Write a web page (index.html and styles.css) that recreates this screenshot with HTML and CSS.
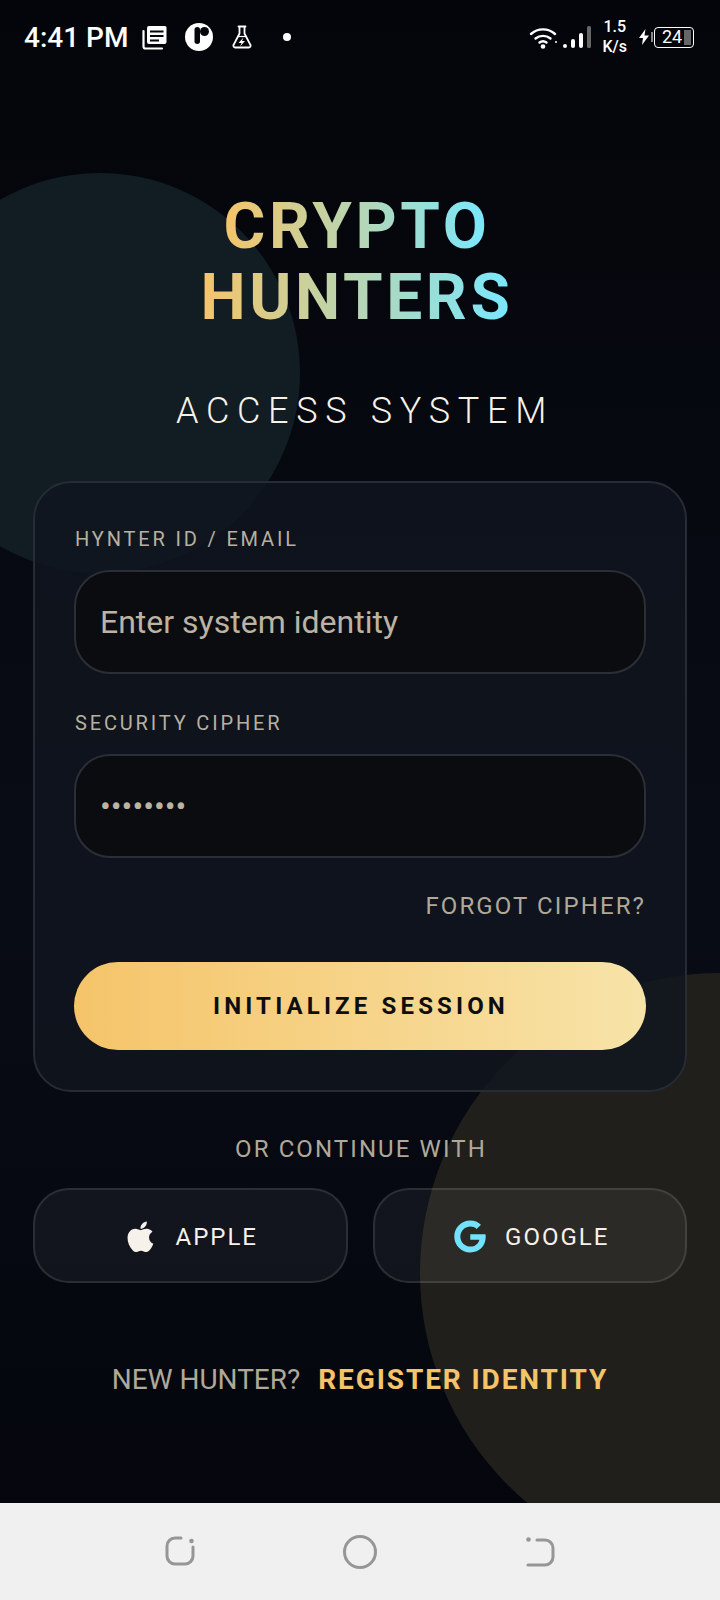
FILE: index.html
```html
<!DOCTYPE html>
<html lang="en">
<head>
    <meta charset="UTF-8">
    <meta name="viewport" content="width=device-width, initial-scale=1.0">
    <title>Crypto Hunters</title>
    <link rel="stylesheet" href="styles.css">
</head>
<body>
    <div id="app">
        <!-- Background circles -->
        <div class="blob blob-teal"></div>
        <div class="blob blob-gold"></div>

        <!-- Status bar -->
        <header class="status-bar">
            <div class="status-left">
                <span class="clock">4:41 PM</span>
                <svg class="icon-news" viewBox="0 0 25 25" width="25" height="25">
                    <path d="M1.5 6v15.5a2 2 0 0 0 2 2H20" fill="none" stroke="#fff" stroke-width="2.2" stroke-linecap="round"/>
                    <path d="M7 1h16a1.5 1.5 0 0 1 1.5 1.5V17a2 2 0 0 1-2 2H7a2 2 0 0 1-2-2V3a2 2 0 0 1 2-2z" fill="#fff"/>
                    <path d="M8 6.5h13.5M8 11h13.5M8 15.5h9" stroke="#05060b" stroke-width="2"/>
                </svg>
                <svg class="icon-p" viewBox="0 0 28 28" width="28" height="28">
                    <circle cx="14" cy="14" r="14" fill="#fff"/>
                    <rect x="9.5" y="4" width="5.5" height="17" rx="2.75" fill="#05060b"/>
                    <circle cx="19.5" cy="8.5" r="4.5" fill="#05060b"/>
                </svg>
                <svg class="icon-flask" viewBox="0 0 20 24" width="20" height="24">
                    <path d="M6.5 1.5h7M7.5 1.5v7L1.6 19.8a1.8 1.8 0 0 0 1.6 2.7h13.6a1.8 1.8 0 0 0 1.6-2.7L12.5 8.500v-7" fill="none" stroke="#fff" stroke-width="1.8" stroke-linecap="round" stroke-linejoin="round"/>
                    <path d="M5.500 11.500h9" stroke="#fff" stroke-width="1.200"/>
                    <path d="M11.500 12.500l-5 5.500h3l-1.500 3.500 5-5.500h-3z" fill="#fff"/>
                </svg>
                <span class="status-dot"></span>
            </div>
            <div class="status-right">
                <svg class="icon-wifi" viewBox="0 0 30 24" width="30" height="24">
                    <path d="M2 9a18 18 0 0 1 24 0M6.500 13.500a12 12 0 0 1 15 0M10.500 17.500a6 6 0 0 1 7 0" fill="none" stroke="#fff" stroke-width="2.400" stroke-linecap="round"/>
                    <circle cx="14" cy="21.500" r="2.300" fill="#fff"/>
                    <circle cx="27" cy="17" r="1" fill="#fff"/>
                </svg>
                <svg class="icon-signal" viewBox="0 0 28 24" width="28" height="24">
                    <rect x="0" y="19" width="4" height="4" rx="2" fill="#fff"/>
                    <rect x="8" y="14" width="4" height="9" rx="2" fill="#fff"/>
                    <rect x="16" y="8" width="4" height="15" rx="2" fill="#fff"/>
                    <rect x="24" y="1" width="4" height="22" rx="1.500" fill="#666"/>
                </svg>
                <span class="net-speed">1.5<br>K/s</span>
                <svg class="icon-bolt" viewBox="0 0 10 16" width="10" height="16">
                    <path d="M6.500 0L0 9h4l-1 7 7-9.500H5.500z" fill="#fff"/>
                </svg>
                <span class="battery-nub"></span>
                <div class="battery">
                    <span class="battery-level">24</span>
                    <span class="battery-fill"></span>
                </div>
            </div>
        </header>

        <!-- Main Content -->
        <main>
            <h1 class="brand">
                <span>CRYPTO</span>
                <span>HUNTERS</span>
            </h1>
            <h2 class="subtitle">ACCESS SYSTEM</h2>

            <form class="login-card">
                <label class="field-label" for="identity">HYNTER ID / EMAIL</label>
                <input class="field-input" id="identity" type="text" placeholder="Enter system identity">

                <label class="field-label" for="cipher">SECURITY CIPHER</label>
                <input class="field-input field-password" id="cipher" type="password" value="password">

                <a class="forgot-link">FORGOT CIPHER?</a>
                <button class="submit-btn" type="button">INITIALIZE SESSION</button>
            </form>

            <p class="divider-text">OR CONTINUE WITH</p>

            <div class="social-row">
                <button class="social-btn" type="button">
                    <svg class="icon-apple" viewBox="3.500 3 16.500 18.300" width="28" height="32">
                        <path d="M17.050 20.280c-.98.95-2.050.8-3.080.35-1.090-.46-2.090-.48-3.240 0-1.440.62-2.200.44-3.060-.35C2.790 15.250 3.510 7.590 9.050 7.310c1.350.07 2.290.74 3.080.8 1.180-.24 2.310-.93 3.570-.84 1.510.12 2.650.72 3.400 1.800-3.120 1.870-2.380 5.980.48 7.130-.57 1.500-1.310 2.990-2.540 4.090zM12.030 7.250c-.15-2.230 1.660-4.070 3.740-4.250.29 2.580-2.340 4.500-3.740 4.250z" fill="#f6f1ea"/>
                    </svg>
                    <span>APPLE</span>
                </button>
                <button class="social-btn" type="button">
                    <svg viewBox="0 0 488 512" width="32" height="33">
                        <path d="M488 261.800C488 403.300 391.100 504 248 504 110.800 504 0 393.200 0 256S110.800 8 248 8c66.800 0 123 24.500 166.300 64.900l-67.500 64.900C258.500 52.600 94.300 116.600 94.300 256c0 86.500 69.100 156.600 153.700 156.600 98.200 0 135-70.400 140.800-106.900H248v-85.300h236.100c2.300 12.700 3.900 24.900 3.900 41.400z" fill="#72e3ff"/>
                    </svg>
                    <span>GOOGLE</span>
                </button>
            </div>

            <p class="register-line">NEW HUNTER? <a>REGISTER IDENTITY</a></p>
        </main>

        <!-- Navigation bar -->
        <footer class="nav-bar">
            <svg viewBox="0 0 32 32" width="32" height="32">
                <path d="M17 2H11a8 8 0 0 0-8 8v10a8 8 0 0 0 8 8h10a8 8 0 0 0 8-8v-9" fill="none" stroke="#969696" stroke-width="3" stroke-linecap="round"/>
                <circle cx="27.500" cy="5" r="2.300" fill="#969696"/>
            </svg>
            <svg viewBox="0 0 36 36" width="36" height="36">
                <circle cx="18" cy="18" r="15.500" fill="none" stroke="#969696" stroke-width="3"/>
            </svg>
            <svg viewBox="0 0 32 32" width="32" height="32">
                <path d="M13 4h8a8 8 0 0 1 8 8v9a8 8 0 0 1-8 8H4" fill="none" stroke="#969696" stroke-width="3" stroke-linecap="round"/>
                <circle cx="4.500" cy="3.500" r="2.300" fill="#969696"/>
            </svg>
        </footer>
    </div>
</body>
</html>
```

FILE: styles.css
```css
/* General Styles */
* {
    box-sizing: border-box;
}

body {
    margin: 0;
    padding: 0;
    background-color: #05060b;
    font-family: Roboto, "Liberation Sans", sans-serif;
}

#app {
    position: relative;
    width: 720px;
    height: 1600px;
    overflow: hidden;
    display: flex;
    flex-direction: column;
    background: linear-gradient(180deg, #04050a 0%, #080c15 55%, #04050c 100%);
}

/* Background circles */
.blob {
    position: absolute;
    border-radius: 50%;
}

.blob-teal {
    left: -100px;
    top: 173px;
    width: 400px;
    height: 400px;
    background-color: #111c23;
}

.blob-gold {
    left: 420px;
    top: 973px;
    width: 600px;
    height: 600px;
    background-color: #211f1b;
}

/* Status bar */
.status-bar {
    position: relative;
    height: 74px;
    flex-shrink: 0;
    display: flex;
    justify-content: space-between;
    align-items: center;
    padding: 0 26px 0 24px;
    color: #fff;
}

.status-left,
.status-right {
    display: flex;
    align-items: center;
}

.clock {
    font-size: 28px;
    font-weight: 500;
    margin-right: 14px;
}

.icon-p {
    margin-left: 18px;
}

.icon-flask {
    margin-left: 19px;
}

.status-dot {
    width: 8px;
    height: 8px;
    margin-left: 31px;
    border-radius: 50%;
    background-color: #fff;
}

.icon-signal {
    margin-left: 4px;
}

.net-speed {
    margin-left: 11px;
    font-size: 16px;
    font-weight: 500;
    line-height: 20px;
    text-align: center;
}

.icon-bolt {
    margin-left: 12px;
}

.battery-nub {
    width: 2px;
    height: 10px;
    margin-left: 2px;
    background-color: #888;
}

.battery {
    width: 40px;
    height: 21px;
    margin-left: 1px;
    padding: 0 2px 0 7px;
    display: flex;
    align-items: center;
    justify-content: space-between;
    border: 1.5px solid #fff;
    border-radius: 4px;
}

.battery-level {
    font-size: 18px;
    line-height: 1;
}

.battery-fill {
    width: 7px;
    height: 15px;
    background-color: #666;
}

/* Main Content */
main {
    position: relative;
    flex: 1;
    padding: 0 33px;
    display: flex;
    flex-direction: column;
}

.brand {
    margin: 117px 0 0;
    padding-right: 6px;
    font-size: 64px;
    font-weight: 700;
    line-height: 71px;
    letter-spacing: 3.600px;
    text-align: center;
}

.brand span {
    display: block;
    width: fit-content;
    margin: 0 auto;
    background: linear-gradient(90deg, #f5c469, #78e8ff);
    -webkit-background-clip: text;
    background-clip: text;
    color: transparent;
}

.subtitle {
    margin: 56px 0 0;
    padding-left: 10px;
    font-size: 36px;
    font-weight: 300;
    line-height: 44px;
    letter-spacing: 7.700px;
    text-align: center;
    color: #f6f1ea;
}

/* Login card */
.login-card {
    margin-top: 48px;
    height: 611px;
    padding: 44px 39px 0;
    display: flex;
    flex-direction: column;
    background-color: rgba(16, 21, 31, 0.8);
    border: 2px solid #272b33;
    border-radius: 38px;
}

.field-label {
    padding-left: 1px;
    font-size: 20px;
    line-height: 24px;
    letter-spacing: 2.840px;
    color: #b8b09f;
}

.field-input {
    width: 100%;
    height: 104px;
    margin: 19px 0 37px;
    padding: 0 24px;
    font-family: inherit;
    font-size: 32px;
    color: #bcb3a2;
    background-color: #0b0c10;
    border: 2px solid #2b2e36;
    border-radius: 36px;
    outline: none;
}

.field-input::placeholder {
    color: #bcb3a2;
    opacity: 1;
}

.field-password {
    margin-bottom: 0;
}

.forgot-link {
    margin-top: 34px;
    font-size: 24px;
    line-height: 28px;
    letter-spacing: 2.100px;
    text-align: right;
    color: #b0a898;
}

.submit-btn {
    height: 88px;
    margin-top: 42px;
    padding-left: 8px;
    font-family: inherit;
    font-size: 24px;
    font-weight: 700;
    letter-spacing: 4.150px;
    color: #0e0e10;
    background: linear-gradient(90deg, #f5c469 0%, #f7e3a8 100%);
    border: none;
    border-radius: 44px;
}

/* Social login */
.divider-text {
    margin: 43px 0 0;
    padding-left: 2px;
    font-size: 24px;
    line-height: 28px;
    letter-spacing: 2.100px;
    text-align: center;
    color: #b0a898;
}

.social-row {
    display: flex;
    gap: 25px;
    margin-top: 25px;
}

.social-btn {
    flex: 1;
    height: 95px;
    padding: 2px 0 0 4px;
    display: flex;
    align-items: center;
    justify-content: center;
    gap: 19px;
    font-family: inherit;
    font-size: 24px;
    font-weight: 400;
    letter-spacing: 2px;
    color: #f6f1ea;
    background-color: rgba(255, 255, 255, 0.05);
    border: 2px solid rgba(255, 255, 255, 0.11);
    border-radius: 36px;
}

.icon-apple {
    margin-right: 2px;
}

/* Register */
.register-line {
    margin: 81px 0 0;
    font-size: 28px;
    line-height: 32px;
    text-align: center;
    color: #b0a898;
}

.register-line a {
    margin-left: 11px;
    font-weight: 700;
    letter-spacing: 1.900px;
    color: #f5c469;
}

/* Navigation bar */
.nav-bar {
    position: relative;
    height: 97px;
    flex-shrink: 0;
    display: flex;
    align-items: center;
    justify-content: center;
    gap: 146px;
    background-color: #f0f0f0;
}
```
